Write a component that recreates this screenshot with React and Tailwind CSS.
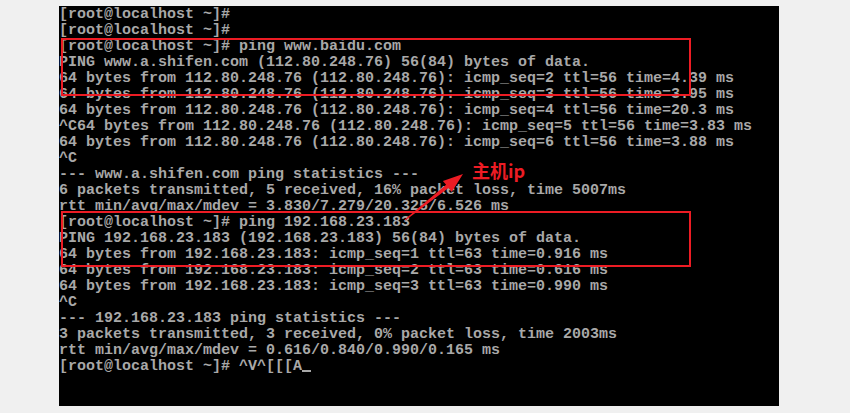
const lines = [
  "[root@localhost ~]#",
  "[root@localhost ~]#",
  "[root@localhost ~]# ping www.baidu.com",
  "PING www.a.shifen.com (112.80.248.76) 56(84) bytes of data.",
  "64 bytes from 112.80.248.76 (112.80.248.76): icmp_seq=2 ttl=56 time=4.39 ms",
  "64 bytes from 112.80.248.76 (112.80.248.76): icmp_seq=3 ttl=56 time=3.95 ms",
  "64 bytes from 112.80.248.76 (112.80.248.76): icmp_seq=4 ttl=56 time=20.3 ms",
  "^C64 bytes from 112.80.248.76 (112.80.248.76): icmp_seq=5 ttl=56 time=3.83 ms",
  "64 bytes from 112.80.248.76 (112.80.248.76): icmp_seq=6 ttl=56 time=3.88 ms",
  "^C",
  "--- www.a.shifen.com ping statistics ---",
  "6 packets transmitted, 5 received, 16% packet loss, time 5007ms",
  "rtt min/avg/max/mdev = 3.830/7.279/20.325/6.526 ms",
  "[root@localhost ~]# ping 192.168.23.183",
  "PING 192.168.23.183 (192.168.23.183) 56(84) bytes of data.",
  "64 bytes from 192.168.23.183: icmp_seq=1 ttl=63 time=0.916 ms",
  "64 bytes from 192.168.23.183: icmp_seq=2 ttl=63 time=0.616 ms",
  "64 bytes from 192.168.23.183: icmp_seq=3 ttl=63 time=0.990 ms",
  "^C",
  "--- 192.168.23.183 ping statistics ---",
  "3 packets transmitted, 3 received, 0% packet loss, time 2003ms",
  "rtt min/avg/max/mdev = 0.616/0.840/0.990/0.165 ms",
];

export default function App() {
  return (
    <div className="w-[850px] h-[413px] bg-[#f0f0f0] pt-[6px] pl-[59px]">
      <div className="relative w-[720px] h-[400px] bg-black overflow-hidden">
        <pre className="m-0 pt-[1px] text-[15px] leading-[16px] font-bold text-[#a8a8a8] font-['Liberation_Mono',monospace]">
          {lines.map((l, i) => (
            <div key={i} className="h-[16px] whitespace-pre">{l}</div>
          ))}
          <div className="h-[16px] whitespace-pre">
            [root@localhost ~]# ^V^[[[A<span className="inline-block w-[9px] h-[2px] bg-[#a8a8a8] align-[-2px]"></span>
          </div>
        </pre>

        <div className="absolute left-[2px] top-[32px] w-[630px] h-[58px] border-2 border-[#ed1c24]"></div>
        <div className="absolute left-[2px] top-[205px] w-[630px] h-[56px] border-2 border-[#ed1c24]"></div>

        <svg className="absolute left-0 top-0" width="720" height="400">
          <polygon
            points="346.3,214.4 389.5,182.0 392.7,185.9 404,168 383.9,174.9 387.1,178.8 345.7,213.6"
            fill="#ed1c24"
          />
        </svg>

        <div className="absolute left-[413px] top-[153px] text-[18px] leading-[22px] font-bold text-[#ed1c24] font-['Noto_Sans_CJK_SC','Noto_Sans',sans-serif]">
          主机ip
        </div>
      </div>
    </div>
  );
}
